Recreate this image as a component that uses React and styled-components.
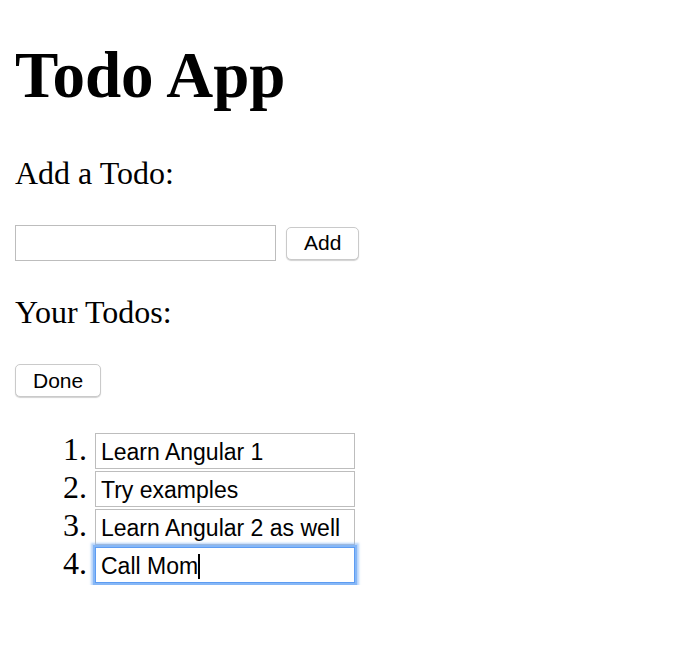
import React from "react"
import styled, {createGlobalStyle} from "styled-components"

const GlobalStyle = createGlobalStyle`
body{
    margin: 0;
    background-color: white;
    color: black;
}
`

const todos = [
    {id: 1, text: "Learn Angular 1"},
    {id: 2, text: "Try examples"},
    {id: 3, text: "Learn Angular 2 as well"},
    {id: 4, text: "Call Mom", focused: true},
]

const App = ()=>{
    const [draft, setDraft] = React.useState("")

    return(
        <Page>
            <GlobalStyle/>
            <Title>Todo App</Title>
            <Heading top={44}>Add a Todo:</Heading>
            <AddRow>
                <TextInput width={261} value={draft} onChange={(e)=>setDraft(e.target.value)}/>
                <Button>Add</Button>
            </AddRow>
            <Heading top={33}>Your Todos:</Heading>
            <DoneRow>
                <Button>Done</Button>
            </DoneRow>
            <TodoList>
                {todos.map((todo)=>(
                    <TodoItem key={todo.id}>
                        <Field>
                            <TextInput width={260} focused={todo.focused} defaultValue={todo.text}/>
                            {todo.focused && <Caret/>}
                        </Field>
                    </TodoItem>
                ))}
            </TodoList>
        </Page>
    )
}
export default App

const Page = styled.div`
padding: 0 15px;
font-family: "Liberation Serif", serif;
`
const Title = styled.h1`
margin: 39px 0 0;
font-size: 65px;
line-height: 72px;
font-weight: bold;
`
const Heading = styled.h3`
margin: ${(p)=>p.top}px 0 0;
font-size: 32px;
line-height: 36px;
font-weight: normal;
`
const AddRow = styled.div`
display: flex;
align-items: center;
gap: 10px;
margin-top: 34px;
`
const DoneRow = styled.div`
display: flex;
margin-top: 34px;
`
const TextInput = styled.input`
box-sizing: border-box;
width: ${(p)=>p.width}px;
height: 36px;
padding: 2px 5px 0;
border: 1px solid ${(p)=>p.focused ? "#5d9cf2" : "#bdbdbd"};
border-radius: 0;
outline: none;
font-family: "Liberation Sans", Arial, sans-serif;
font-size: 23px;
color: black;
background: white;
box-shadow: ${(p)=>p.focused ? "0 0 0 2px #86b7f6, 0 0 2px 4px rgba(130,180,245,0.6)" : "none"};
`
const Button = styled.button`
box-sizing: border-box;
height: 33px;
padding: 0 17px;
border: 1px solid #cacaca;
border-radius: 5px;
background: white;
box-shadow: 0 1px 1px rgba(0,0,0,0.18);
font-family: "Liberation Sans", Arial, sans-serif;
font-size: 21px;
color: black;
`
const TodoList = styled.ol`
margin: 36px 0 0;
padding-left: 80px;
font-size: 32px;
line-height: 30px;
`
const TodoItem = styled.li`
margin-bottom: 2px;
`
const Field = styled.span`
position: relative;
display: inline-block;
`
const Caret = styled.span`
position: absolute;
left: 103px;
top: 7px;
width: 2px;
height: 25px;
background-color: black;
`
